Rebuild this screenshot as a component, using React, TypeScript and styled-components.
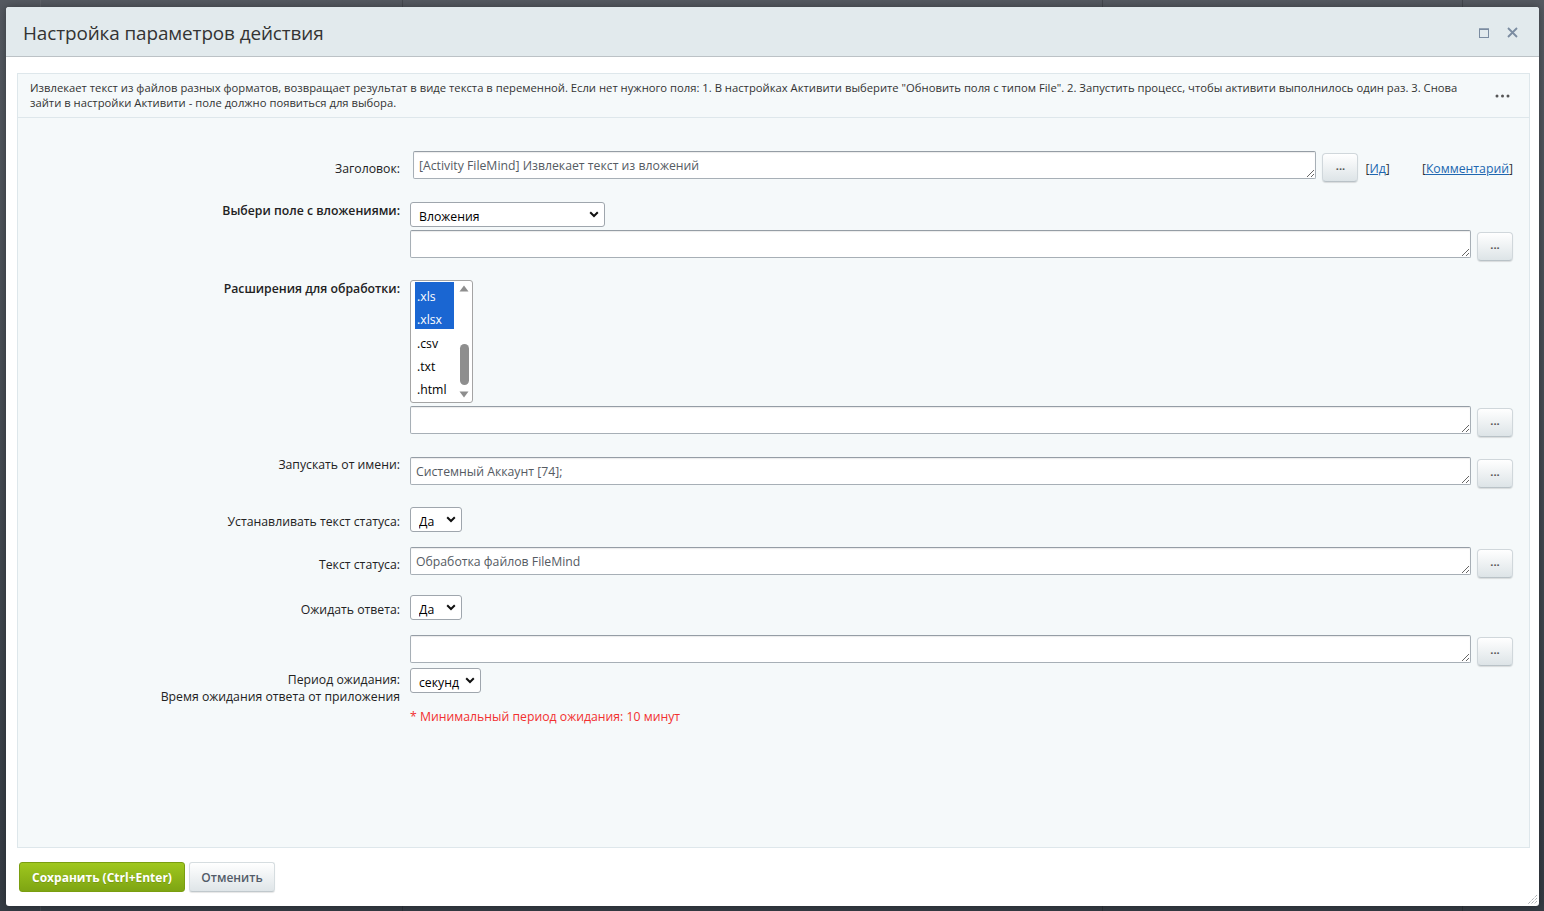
import React from "react";
import styled, { createGlobalStyle } from "styled-components";

const Global = createGlobalStyle`
  html, body { margin: 0; padding: 0; }
  body { font-family: "Open Sans", "Liberation Sans", sans-serif; color: #222; }
  * { box-sizing: border-box; }
`;

const Backdrop = styled.div`
  width: 1544px;
  height: 911px;
  padding: 7px 5px 5px 6px;
  background-color: #454b53;
  background-image:
    linear-gradient(to right, transparent 40px, rgba(255,255,255,0.06) 40px, rgba(255,255,255,0.06) 41px, transparent 41px),
    linear-gradient(to right, transparent 402px, rgba(0,0,0,0.18) 402px, rgba(0,0,0,0.18) 403px, transparent 403px),
    linear-gradient(to right, transparent 1102px, rgba(0,0,0,0.2) 1102px, rgba(0,0,0,0.2) 1103px, transparent 1103px),
    linear-gradient(to right, transparent 1462px, rgba(0,0,0,0.2) 1462px, rgba(0,0,0,0.2) 1463px, transparent 1463px),
    linear-gradient(to bottom, #555a61, #353c44);
  overflow: hidden;
`;

const Dialog = styled.div`
  width: 1533px;
  height: 899px;
  background: #fff;
  border-radius: 3px;
  display: flex;
  flex-direction: column;
  position: relative;
  box-shadow: 0 0 8px rgba(0,0,0,0.35);
`;

const Header = styled.div`
  height: 50px;
  flex: none;
  background: #e2eaed;
  border-bottom: 1px solid #bcc2c6;
  border-radius: 3px 3px 0 0;
  display: flex;
  align-items: center;
  padding: 2px 21px 0 17px;
`;

const Title = styled.div`
  flex: 1;
  font-size: 18.9px;
  color: #333;
  letter-spacing: -0.1px;
`;

const HeaderIcons = styled.div`
  display: flex;
  align-items: center;
  gap: 18px;
`;

const Content = styled.div`
  flex: 1;
  margin: 16px 9px 0 11px;
  background: #f5f9fa;
  border: 1px solid #dee7eb;
  display: flex;
  flex-direction: column;
`;

const Description = styled.div`
  display: flex;
  align-items: center;
  border-bottom: 1px solid #dee7eb;
  padding: 6px 0 7px 12px;
`;

const DescText = styled.div`
  flex: 1;
  font-size: 11.25px;
  line-height: 15px;
  color: #333;
`;

const More = styled.div`
  width: 62px;
  display: flex;
  justify-content: center;
  padding-left: 8px;
  padding-top: 1px;
`;

const Form = styled.div`
  display: flex;
  flex-direction: column;
  padding: 0 16px 0 0;
`;

const Row = styled.div<{ $mt: number }>`
  display: flex;
  align-items: flex-start;
  margin-top: ${(p) => p.$mt}px;
`;

const Label = styled.div<{ $top?: number; $bold?: boolean }>`
  width: 382px;
  flex: none;
  text-align: right;
  font-size: 12.25px;
  line-height: 17px;
  color: #222;
  font-weight: ${(p) => (p.$bold ? 600 : 400)};
  margin-top: ${(p) => p.$top ?? 0}px;
  margin-right: 10px;
`;

const Field = styled.div`
  flex: 1;
  display: flex;
  flex-direction: column;
  min-width: 0;
`;

const Line = styled.div<{ $mt?: number; $ml?: number }>`
  display: flex;
  align-items: flex-start;
  margin-top: ${(p) => p.$mt ?? 0}px;
  margin-left: ${(p) => p.$ml ?? 0}px;
`;

const Area = styled.textarea`
  flex: 1;
  height: 28px;
  min-width: 0;
  border: 1px solid #a7afb6;
  border-top-color: #959da5;
  border-radius: 2px;
  background: #fff;
  box-shadow: inset 0 1px 1px rgba(0,0,0,0.08);
  font-family: "Open Sans", "Liberation Sans", sans-serif;
  font-size: 12.25px;
  line-height: 16px;
  color: #555b63;
  padding: 6px 5px 0;
  outline: none;
  resize: both;
  overflow: hidden;
`;

const DotsButton = styled.button`
  flex: none;
  width: 36px;
  height: 29px;
  margin-top: 2px;
  margin-left: 6px;
  border: 1px solid #d0d7db;
  border-bottom-color: #b9c2c7;
  border-radius: 4px;
  background: linear-gradient(to bottom, #ffffff, #dde4e7);
  box-shadow: 0 1px 1px rgba(0,0,0,0.12);
  font-family: "Open Sans", "Liberation Sans", sans-serif;
  font-size: 11px;
  font-weight: 700;
  color: #555;
  padding: 0 0 5px;
  line-height: 1;
`;

const LinkWrap = styled.span<{ $ml: number }>`
  font-size: 12.25px;
  line-height: 17px;
  color: #333;
  margin-top: 9px;
  margin-left: ${(p) => p.$ml}px;
  white-space: nowrap;
`;

const A = styled.a`
  color: #2067b0;
  text-decoration: underline;
`;

const SelectWrap = styled.div<{ $w: number }>`
  position: relative;
  width: ${(p) => p.$w}px;
  height: 25px;
`;

const Select = styled.select`
  appearance: none;
  -webkit-appearance: none;
  width: 100%;
  height: 100%;
  border: 1px solid #9fa6ad;
  border-radius: 3px;
  background: #fff;
  font-family: "Open Sans", "Liberation Sans", sans-serif;
  font-size: 12.25px;
  color: #000;
  padding: 3px 20px 0 8px;
  outline: none;
`;

const Chevron = styled.svg`
  position: absolute;
  right: 6px;
  top: 9px;
  pointer-events: none;
`;

const ListBox = styled.div`
  width: 63px;
  height: 123px;
  border: 1px solid #a4a4a4;
  border-radius: 3px;
  background: #fff;
  display: flex;
  overflow: hidden;
`;

const Options = styled.div`
  width: 43px;
  padding: 1px 0 0 4px;
`;

const Option = styled.div<{ $sel?: boolean }>`
  height: 23px;
  line-height: 23px;
  padding-left: 2px;
  padding-top: 3px;
  font-size: 12.25px;
  color: ${(p) => (p.$sel ? "#fff" : "#000")};
  background: ${(p) => (p.$sel ? "#1a66d2" : "transparent")};
`;

const Highlighted = styled.div`
  background: #1a66d2;
  padding-bottom: 1px;
`;

const ScrollBar = styled.div`
  flex: 1;
  display: flex;
  flex-direction: column;
  align-items: center;
  padding: 4px 0 4px 2px;
`;

const Thumb = styled.div`
  width: 9px;
  height: 41px;
  border-radius: 5px;
  background: #8e8e8e;
  margin-top: 52px;
  margin-bottom: auto;
`;

const Note = styled.div`
  font-size: 12.25px;
  line-height: 17px;
  color: #f23030;
  margin-top: 15px;
`;

const Footer = styled.div`
  flex: none;
  height: 58px;
  display: flex;
  align-items: center;
  gap: 4px;
  padding: 0 0 0 13px;
`;

const SaveButton = styled.button`
  height: 30px;
  width: 166px;
  border: 1px solid #7a9e10;
  border-radius: 3px;
  background: linear-gradient(to bottom, #9fc71e, #7ea513);
  color: #fff;
  font-family: "Open Sans", "Liberation Sans", sans-serif;
  font-weight: 700;
  font-size: 12px;
  text-shadow: 0 1px 0 rgba(0,0,0,0.15);
  padding: 0;
`;

const CancelButton = styled.button`
  height: 30px;
  width: 86px;
  border: 1px solid #d6dde0;
  border-bottom-color: #c0c8cc;
  border-radius: 3px;
  background: linear-gradient(to bottom, #ffffff, #dfe5e8);
  box-shadow: 0 1px 1px rgba(0,0,0,0.1);
  color: #535c69;
  font-family: "Open Sans", "Liberation Sans", sans-serif;
  font-weight: 600;
  font-size: 12px;
  padding: 0;
`;

const Grip = styled.svg`
  position: absolute;
  right: 1px;
  bottom: 1px;
`;

const Sel = ({ w, value, options }: { w: number; value: string; options: string[] }) => (
  <SelectWrap $w={w}>
    <Select defaultValue={value}>
      {options.map((o) => (
        <option key={o}>{o}</option>
      ))}
    </Select>
    <Chevron width="10" height="7" viewBox="0 0 10 7">
      <path d="M1.2 1.3 L5 5 L8.8 1.3" fill="none" stroke="#111" strokeWidth="2" />
    </Chevron>
  </SelectWrap>
);

const AreaLine = ({ mt, value }: { mt?: number; value?: string }) => (
  <Line $mt={mt}>
    <Area defaultValue={value ?? ""} />
    <DotsButton>...</DotsButton>
  </Line>
);

export default function App() {
  return (
    <>
      <Global />
      <Backdrop>
        <Dialog>
          <Header>
            <Title>Настройка параметров действия</Title>
            <HeaderIcons>
              <svg width="10" height="10" viewBox="0 0 10 10">
                <rect x="0.5" y="1" width="9" height="8.5" fill="none" stroke="#7b8ca1" strokeWidth="1" />
                <rect x="0" y="0.5" width="10" height="1.5" fill="#7b8ca1" />
              </svg>
              <svg width="11" height="11" viewBox="0 0 11 11">
                <path d="M1 1 L10 10 M10 1 L1 10" stroke="#7b8ca1" strokeWidth="1.8" />
              </svg>
            </HeaderIcons>
          </Header>
          <Content>
            <Description>
              <DescText>
                Извлекает текст из файлов разных форматов, возвращает результат в виде текста в переменной. Если нет нужного поля: 1. В настройках Активити выберите "Обновить поля с типом File". 2. Запустить процесс, чтобы активити выполнилось один раз. 3. Снова зайти в настройки Активити - поле должно появиться для выбора.
              </DescText>
              <More>
                <svg width="15" height="4" viewBox="0 0 15 4">
                  <circle cx="2" cy="2" r="1.5" fill="#555" />
                  <circle cx="7.5" cy="2" r="1.5" fill="#555" />
                  <circle cx="13" cy="2" r="1.5" fill="#555" />
                </svg>
              </More>
            </Description>
            <Form>
              <Row $mt={33}>
                <Label $top={9}>Заголовок:</Label>
                <Field>
                  <Line $ml={3}>
                    <Area defaultValue="[Activity FileMind] Извлекает текст из вложений" />
                    <DotsButton>...</DotsButton>
                    <LinkWrap $ml={7}>
                      [<A href="#">Ид</A>]
                    </LinkWrap>
                    <LinkWrap $ml={32}>
                      [<A href="#">Комментарий</A>]
                    </LinkWrap>
                  </Line>
                </Field>
              </Row>
              <Row $mt={20}>
                <Label $top={0} $bold>
                  Выбери поле с вложениями:
                </Label>
                <Field>
                  <Sel w={195} value="Вложения" options={["Вложения"]} />
                  <AreaLine mt={3} />
                </Field>
              </Row>
              <Row $mt={19}>
                <Label $top={0} $bold>
                  Расширения для обработки:
                </Label>
                <Field>
                  <ListBox>
                    <Options>
                      <Highlighted>
                        <Option $sel>.xls</Option>
                        <Option $sel>.xlsx</Option>
                      </Highlighted>
                      <Option>.csv</Option>
                      <Option>.txt</Option>
                      <Option>.html</Option>
                    </Options>
                    <ScrollBar>
                      <svg width="10" height="7" viewBox="0 0 10 7">
                        <path d="M0.5 6.5 L5 0.5 L9.5 6.5 Z" fill="#8e8e8e" />
                      </svg>
                      <Thumb />
                      <svg width="10" height="7" viewBox="0 0 10 7">
                        <path d="M0.5 0.5 L5 6.5 L9.5 0.5 Z" fill="#8e8e8e" />
                      </svg>
                    </ScrollBar>
                  </ListBox>
                  <AreaLine mt={3} />
                </Field>
              </Row>
              <Row $mt={20}>
                <Label $top={-1}>Запускать от имени:</Label>
                <Field>
                  <AreaLine value="Системный Аккаунт [74];" />
                </Field>
              </Row>
              <Row $mt={19}>
                <Label $top={6}>Устанавливать текст статуса:</Label>
                <Field>
                  <Sel w={52} value="Да" options={["Да", "Нет"]} />
                </Field>
              </Row>
              <Row $mt={15}>
                <Label $top={9}>Текст статуса:</Label>
                <Field>
                  <AreaLine value="Обработка файлов FileMind" />
                </Field>
              </Row>
              <Row $mt={17}>
                <Label $top={6}>Ожидать ответа:</Label>
                <Field>
                  <Sel w={52} value="Да" options={["Да", "Нет"]} />
                </Field>
              </Row>
              <Row $mt={15}>
                <Label />
                <Field>
                  <AreaLine />
                </Field>
              </Row>
              <Row $mt={2}>
                <Label $top={3}>
                  Период ожидания:
                  <br />
                  Время ожидания ответа от приложения
                </Label>
                <Field>
                  <Sel w={71} value="секунд" options={["секунд", "минут", "часов", "дней"]} />
                  <Note>* Минимальный период ожидания: 10 минут</Note>
                </Field>
              </Row>
            </Form>
          </Content>
          <Footer>
            <SaveButton>Сохранить (Ctrl+Enter)</SaveButton>
            <CancelButton>Отменить</CancelButton>
          </Footer>
          <Grip width="12" height="12" viewBox="0 0 12 12">
            <path d="M11 2 L2 11 M11 5 L5 11 M11 8 L8 11" stroke="#8a9095" strokeWidth="1" strokeDasharray="1 1" />
          </Grip>
        </Dialog>
      </Backdrop>
    </>
  );
}
